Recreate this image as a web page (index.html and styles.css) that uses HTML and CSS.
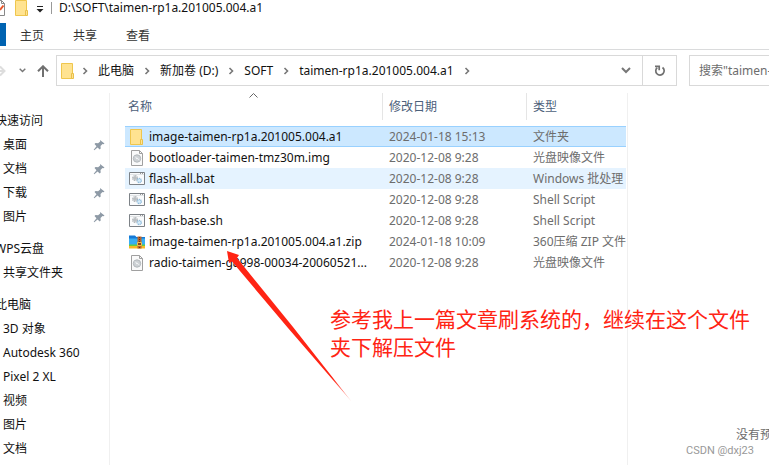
FILE: index.html
```html
<!DOCTYPE html>
<html lang="zh-CN">
<head>
<meta charset="utf-8">
<title>D:\SOFT\taimen-rp1a.201005.004.a1</title>
<link rel="stylesheet" href="styles.css">
</head>
<body>
<svg class="defs" aria-hidden="true">
  <symbol id="folder" viewBox="0 0 14 16"><path d="M.5.5h11v15H.5z" fill="#ffe391" stroke="#efc64d"/><path d="M10.500 10.500h2v5h-2z" fill="#ffe391" stroke="#e9c04a"/></symbol>
  <symbol id="chev" viewBox="0 0 6 8"><path d="M1.500 1l3 3-3 3" fill="none" stroke="#777" stroke-width="1.600"/></symbol>
  <symbol id="down" viewBox="0 0 10 7"><path d="M1 1l4 4 4-4" fill="none" stroke="#777" stroke-width="2"/></symbol>
  <symbol id="pin" viewBox="0 0 12 12"><path d="M7 1l4.500 3.500-1 .8-1-.2-2 2 .2 2.400-1 1L4.600 8.400 1.300 11.200l-.6-.5 2.800-3.400L1.500 5l1-1 2.600.2L7.200 2.400z" fill="#8e9aa6"/></symbol>
  <symbol id="disc" viewBox="0 0 16 16"><path d="M2.500.5h8l3 3v12h-11z" fill="#fafafa" stroke="#a0a0a0"/><path d="M10.500.5v3h3" fill="none" stroke="#a0a0a0"/><circle cx="8" cy="8.500" r="3.700" fill="#cdd1d4" stroke="#b3b8bc"/><path d="M6 6.500l1.500 1.500M9 9l1.500 1" stroke="#eef1f3"/><circle cx="8" cy="8.500" r=".8" fill="#fff"/></symbol>
  <symbol id="script" viewBox="0 0 16 16"><path d="M.5 1.500h15v12H.5z" fill="#fafbfc" stroke="#7d8287"/><path d="M1 3.500h14" stroke="#e1e4e6"/><path d="M11 2.500h1M13 2.500h1" stroke="#999"/><circle cx="6" cy="7" r="2.200" fill="#e4e6e8" stroke="#a0a5a9" stroke-width="1.400" stroke-dasharray="1 .6"/><circle cx="6" cy="7" r=".8" fill="#8a8f93"/><circle cx="10.300" cy="9.500" r="2" fill="#d8edfa" stroke="#8bb9da" stroke-width="1.400" stroke-dasharray="1 .6"/></symbol>
  <symbol id="zip" viewBox="0 0 16 16"><path d="M0 1.500h6L7.500 3H16v5H0z" fill="#1579d6"/><path d="M0 4.500h16V11H0z" fill="#38aef3"/><path d="M0 10.500h16V12H0z" fill="#63cc45"/><path d="M0 12h16v2.500H0z" fill="#f9b824"/><path d="M8.500 2.500h4v12h-4z" fill="#b9652b"/><path d="M10.500 3v11" stroke="#70330f" stroke-dasharray="1 1"/><path d="M8.500 8.500h4v3h-4z" fill="#8a421a" stroke="#f2c04b"/></symbol>
</svg>

<header class="titlebar">
  <svg class="props" viewBox="0 0 6 16" aria-hidden="true"><path d="M0 .5h1.500l3 3v12H0" fill="#fff" stroke="#888"/><path d="M1.500.5v3h3" fill="none" stroke="#888"/><path d="M0 10l3.500-4.500" stroke="#e8562a" stroke-width="2"/></svg>
  <svg class="folder" aria-hidden="true"><use href="#folder"/></svg>
  <svg class="quick" viewBox="0 0 8 7" aria-hidden="true"><path d="M1 .5h6" stroke="#222"/><path d="M.5 3h7L4 6.500z" fill="#222"/></svg>
  <span class="rule"></span>
  <span>D:\SOFT\taimen-rp1a.201005.004.a1</span>
</header>

<nav class="tabs">
  <button class="file" type="button" aria-label="文件"></button>
  <button type="button">主页</button>
  <button type="button">共享</button>
  <button type="button">查看</button>
</nav>

<div class="toolbar">
  <div class="moves">
    <svg class="forward" viewBox="0 0 6 12" aria-hidden="true"><path d="M0 6h4M0 1.500L4.500 6 0 10.500" fill="none" stroke="#ddd" stroke-width="2"/></svg>
    <svg class="recent" aria-hidden="true"><use href="#down"/></svg>
    <svg class="up" viewBox="0 0 12 12" aria-hidden="true"><path d="M6 12V1.500M1 6.300l5-5 5 5" fill="none" stroke="#707070" stroke-width="2"/></svg>
  </div>
  <div class="address">
    <svg class="folder" aria-hidden="true"><use href="#folder"/></svg>
    <svg class="chev" aria-hidden="true"><use href="#chev"/></svg>
    <a href="#">此电脑</a>
    <svg class="chev" aria-hidden="true"><use href="#chev"/></svg>
    <a href="#">新加卷 (D:)</a>
    <svg class="chev" aria-hidden="true"><use href="#chev"/></svg>
    <a href="#">SOFT</a>
    <svg class="chev" aria-hidden="true"><use href="#chev"/></svg>
    <a href="#">taimen-rp1a.201005.004.a1</a>
    <svg class="chev" aria-hidden="true"><use href="#chev"/></svg>
    <svg class="history" aria-hidden="true"><use href="#down"/></svg>
    <button class="refresh" type="button" aria-label="刷新"><svg viewBox="0 0 12 12" aria-hidden="true"><path d="M3.300 2.600A4.200 4.200 0 1 0 8.500 2.500" fill="none" stroke="#707070" stroke-width="1.700"/><path d="M1 1.300h4.200v4" fill="none" stroke="#707070" stroke-width="1.700"/></svg></button>
  </div>
  <input class="search" type="text" aria-label="搜索" placeholder="搜索&quot;taimen-rp1a.201005.004.a1&quot;">
</div>

<div class="panes">
  <nav class="tree">
    <section>
      <h2>快速访问</h2>
      <a href="#">桌面<svg aria-hidden="true"><use href="#pin"/></svg></a>
      <a href="#">文档<svg aria-hidden="true"><use href="#pin"/></svg></a>
      <a href="#">下载<svg aria-hidden="true"><use href="#pin"/></svg></a>
      <a href="#">图片<svg aria-hidden="true"><use href="#pin"/></svg></a>
    </section>
    <section>
      <h2>WPS云盘</h2>
      <a href="#">共享文件夹</a>
    </section>
    <section>
      <h2>此电脑</h2>
      <a href="#">3D 对象</a>
      <a href="#">Autodesk 360</a>
      <a href="#">Pixel 2 XL</a>
      <a href="#">视频</a>
      <a href="#">图片</a>
      <a href="#">文档</a>
    </section>
  </nav>

  <main class="files">
    <table>
      <colgroup><col><col class="date"><col class="type"></colgroup>
      <thead>
        <tr><th>名称<svg class="sort" viewBox="0 0 9 5" aria-hidden="true"><path d="M.5 4.500l4-4 4 4" fill="none" stroke="#666"/></svg></th><th>修改日期</th><th>类型</th></tr>
      </thead>
      <tbody>
        <tr class="selected"><td><svg aria-hidden="true"><use href="#folder"/></svg>image-taimen-rp1a.201005.004.a1</td><td>2024-01-18 15:13</td><td>文件夹</td></tr>
        <tr><td><svg aria-hidden="true"><use href="#disc"/></svg>bootloader-taimen-tmz30m.img</td><td>2020-12-08 9:28</td><td>光盘映像文件</td></tr>
        <tr class="hovered"><td><svg aria-hidden="true"><use href="#script"/></svg>flash-all.bat</td><td>2020-12-08 9:28</td><td>Windows 批处理</td></tr>
        <tr><td><svg aria-hidden="true"><use href="#script"/></svg>flash-all.sh</td><td>2020-12-08 9:28</td><td>Shell Script</td></tr>
        <tr><td><svg aria-hidden="true"><use href="#script"/></svg>flash-base.sh</td><td>2020-12-08 9:28</td><td>Shell Script</td></tr>
        <tr><td><svg aria-hidden="true"><use href="#zip"/></svg>image-taimen-rp1a.201005.004.a1.zip</td><td>2024-01-18 10:09</td><td>360压缩 ZIP 文件</td></tr>
        <tr><td><svg aria-hidden="true"><use href="#disc"/></svg>radio-taimen-g8998-00034-20060521...</td><td>2020-12-08 9:28</td><td>光盘映像文件</td></tr>
      </tbody>
    </table>
  </main>

  <aside class="preview"><p>没有预览。</p></aside>

  <svg class="arrow" viewBox="0 0 126 152" aria-hidden="true">
    <defs><linearGradient id="fade" x1="0" y1="0" x2="1" y2="1"><stop offset=".85" stop-color="#ff2414"/><stop offset="1" stop-color="#ff2414" stop-opacity=".3"/></linearGradient></defs>
    <path d="M0 0L12 4 10 7 66 76 124.500 150.500 61 77 5 10.500 2 12z" fill="url(#fade)"/>
  </svg>
  <p class="note">参考我上一篇文章刷系统的，继续在这个文件<br>夹下解压文件</p>
  <span class="credit">CSDN @dxj23</span>
</div>
</body>
</html>
```

FILE: styles.css
```css
* { box-sizing: border-box; }

body {
  margin: 0;
  height: 100vh;
  display: flex;
  flex-direction: column;
  overflow: hidden;
  background: #fff;
  color: #111;
  font: 12px/16px "Noto Sans", "Noto Sans CJK SC", sans-serif;
}

a { color: inherit; text-decoration: none; }
button, input { font: inherit; color: inherit; }
svg { display: block; flex: none; }
.defs { position: absolute; width: 0; height: 0; }

.folder { width: 14px; height: 16px; }

.titlebar {
  display: flex;
  align-items: center;
  height: 23px;
  padding-bottom: 7px;
}
.props { width: 6px; height: 16px; margin-right: 9px; }
.quick { width: 8px; height: 7px; margin: 2px 7px 0; }
.rule { width: 1px; height: 12px; margin-right: 7px; background: #999; }

.tabs {
  display: flex;
  height: 27px;
  padding-bottom: 3px;
  border-bottom: 1px solid #dadbdc;
}
.tabs button {
  padding: 2px 0 0;
  margin-right: 29px;
  border: 0;
  background: none;
  color: #333;
}
.tabs .file { width: 6px; margin-right: 14px; background: #0063b1; }

.toolbar {
  display: flex;
  padding: 5px 0 7px;
}
.moves {
  display: flex;
  align-items: center;
  width: 56px;
}
.forward { width: 6px; height: 12px; }
.recent { width: 7px; height: 5px; margin: 0 14px 0 13px; }
.up { width: 12px; height: 12px; margin-left: -3px; }

.address {
  flex: 1;
  display: flex;
  align-items: center;
  height: 31px;
  padding-left: 4px;
  border: 1px solid #d9d9d9;
}
.address .chev { width: 6px; height: 8px; margin: 0 10px 0 7px; }
.address a + .chev { margin-left: 10px; }
.history { width: 10px; height: 7px; margin: 0 11px 0 auto; }
.refresh {
  align-self: stretch;
  display: grid;
  place-items: center;
  width: 34px;
  padding: 0;
  border: 0;
  border-left: 1px solid #d9d9d9;
  background: none;
}
.refresh svg { width: 12px; height: 12px; }
.search {
  width: 80px;
  height: 31px;
  margin-left: 12px;
  padding: 0 0 0 9px;
  border: 1px solid #d9d9d9;
  border-right: 0;
  border-radius: 0;
  background: #fff;
}
.search::placeholder { color: #6d6d6d; opacity: 1; }

.panes {
  position: relative;
  flex: 1;
  min-height: 0;
  display: grid;
  grid-template-columns: 110px 1fr 142px;
}

.tree {
  padding-top: 16px;
  border-right: 1px solid #f0f0f0;
}
.tree section { margin-bottom: 8px; }
.tree h2 {
  margin: 0 0 0 -5px;
  font: inherit;
  line-height: 24px;
}
.tree a {
  display: flex;
  align-items: center;
  justify-content: space-between;
  height: 24px;
  padding: 0 4px 0 3px;
}
.tree a svg { width: 12px; height: 12px; }

.files {
  padding: 0 1px 0 15px;
  overflow: hidden;
}
table {
  width: 100%;
  table-layout: fixed;
  border-collapse: separate;
  border-spacing: 0;
}
.date { width: 144px; }
.type { width: 100px; }
th, td {
  padding: 0 0 0 7px;
  overflow: hidden;
  white-space: nowrap;
  text-align: left;
  font-weight: normal;
}
th {
  position: relative;
  height: 27px;
  color: #4c607a;
  background: linear-gradient(#e5e5e5, #e5e5e5) left / 1px 100% no-repeat;
}
th:first-child { padding-left: 3px; background: none; }
.sort { position: absolute; top: 0; left: 50%; width: 9px; height: 5px; margin-left: -5px; }
tbody::before { content: ""; display: block; height: 6px; }
td { height: 21px; color: #6d6d6d; }
td:first-child {
  display: flex;
  align-items: center;
  gap: 4px;
  padding-left: 4px;
  color: #111;
}
td svg { width: 16px; height: 16px; }
.selected td {
  background: #cce8ff;
  box-shadow: inset 0 1px #99d1ff, inset 0 -1px #99d1ff;
}
.hovered td { background: #e5f3ff; }

.preview {
  border-left: 1px solid #f0f0f0;
  padding: 334px 0 0 108px;
  overflow: hidden;
  white-space: nowrap;
  color: #6d6d6d;
}
.preview p { margin: 0; }

.arrow {
  position: absolute;
  top: 158px;
  left: 227px;
  width: 126px;
  height: 152px;
}
.note {
  position: absolute;
  top: 212px;
  left: 330px;
  margin: 0;
  color: #ff2414;
  font-size: 21px;
  line-height: 28px;
  white-space: nowrap;
}
.credit {
  position: absolute;
  right: 15px;
  bottom: 6px;
  color: #999;
  font: 11px/16px Roboto, sans-serif;
}
```
